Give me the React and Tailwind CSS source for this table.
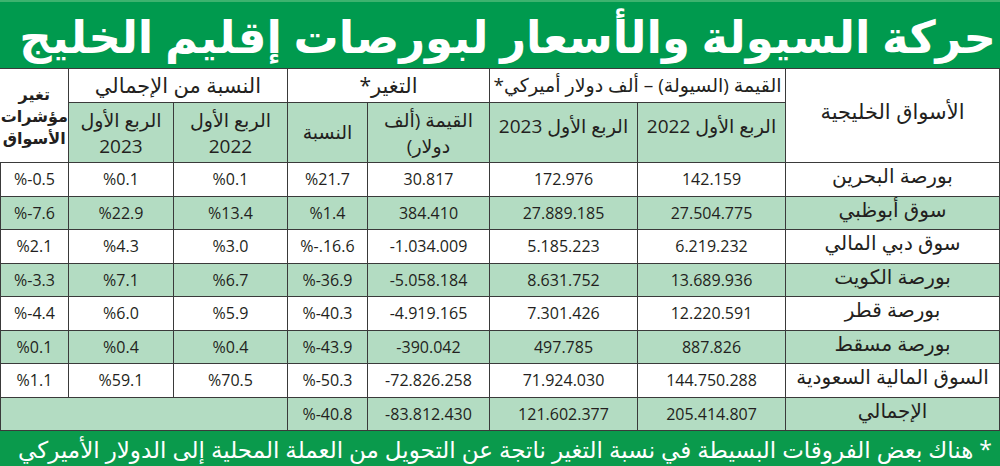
const rows = [
  { name: "بورصة البحرين", v22: "142.159", v23: "172.976", dv: "30.817", dp: "%21.7", s22: "%0.1", s23: "%0.1", idx: "%-0.5" },
  { name: "سوق أبوظبي", v22: "27.504.775", v23: "27.889.185", dv: "384.410", dp: "%1.4", s22: "%13.4", s23: "%22.9", idx: "%-7.6" },
  { name: "سوق دبي المالي", v22: "6.219.232", v23: "5.185.223", dv: "-1.034.009", dp: "%-.16.6", s22: "%3.0", s23: "%4.3", idx: "%2.1" },
  { name: "بورصة الكويت", v22: "13.689.936", v23: "8.631.752", dv: "-5.058.184", dp: "%-36.9", s22: "%6.7", s23: "%7.1", idx: "%-3.3" },
  { name: "بورصة قطر", v22: "12.220.591", v23: "7.301.426", dv: "-4.919.165", dp: "%-40.3", s22: "%5.9", s23: "%6.0", idx: "%-4.4" },
  { name: "بورصة مسقط", v22: "887.826", v23: "497.785", dv: "-390.042", dp: "%-43.9", s22: "%0.4", s23: "%0.4", idx: "%0.1" },
  { name: "السوق المالية السعودية", v22: "144.750.288", v23: "71.924.030", dv: "-72.826.258", dp: "%-50.3", s22: "%70.5", s23: "%59.1", idx: "%1.1" },
];

const cell = "border border-[#3a3a3a] text-center align-middle p-0";
const num = "text-[16px] text-[#231f20]";

function NumCell({ children }) {
  return (
    <td className={`${cell} ${num}`}>
      <span dir="ltr">{children}</span>
    </td>
  );
}

export default function App() {
  return (
    <div
      dir="rtl"
      className="w-[1000px] h-[466px] bg-white overflow-hidden text-[#231f20]"
      style={{ fontFamily: "'Open Sans', 'DejaVu Sans', sans-serif" }}
    >
      {/* Title */}
      <div className="h-[68px] bg-[#009a4e] border-t-2 border-[#3db36f] flex items-center px-1">
        <h1 className="text-white font-bold text-[45px] leading-none tracking-tight whitespace-nowrap">
          حركة السيولة والأسعار لبورصات إقليم الخليج
        </h1>
      </div>

      <table className="w-[999px] border-collapse table-fixed">
        <colgroup>
          <col className="w-[214px]" />
          <col className="w-[148px]" />
          <col className="w-[148px]" />
          <col className="w-[122px]" />
          <col className="w-[80px]" />
          <col className="w-[114px]" />
          <col className="w-[105px]" />
          <col className="w-[68px]" />
        </colgroup>
        <thead>
          <tr className="h-[34px]">
            <th rowSpan={2} className={`${cell} font-normal text-[21px] pb-2`}>
              الأسواق الخليجية
            </th>
            <th colSpan={2} className={`${cell} font-normal text-[19px] whitespace-nowrap`}>
              القيمة (السيولة) – ألف دولار أميركي*
            </th>
            <th colSpan={2} className={`${cell} font-normal text-[21px]`}>
              التغير*
            </th>
            <th colSpan={2} className={`${cell} font-normal text-[21px]`}>
              النسبة من الإجمالي
            </th>
            <th rowSpan={2} className={`${cell} font-bold text-[16px] leading-[22px] border-l-0`}>
              تغير
              <br />
              مؤشرات
              <br />
              الأسواق
            </th>
          </tr>
          <tr className="h-[60px] bg-[#b3dcc2]">
            <th className={`${cell} font-normal text-[19px] pb-3 whitespace-nowrap`}>الربع الأول 2022</th>
            <th className={`${cell} font-normal text-[19px] pb-3 whitespace-nowrap`}>الربع الأول 2023</th>
            <th className={`${cell} font-normal text-[19px] leading-[26px]`}>
              القيمة (ألف
              <br />
              دولار)
            </th>
            <th className={`${cell} font-normal text-[19px]`}>النسبة</th>
            <th className={`${cell} font-normal text-[19px] leading-[26px]`}>
              الربع الأول
              <br />
              2022
            </th>
            <th className={`${cell} font-normal text-[19px] leading-[26px]`}>
              الربع الأول
              <br />
              2023
            </th>
          </tr>
        </thead>
        <tbody>
          {rows.map((r, i) => (
            <tr key={r.name} className={`h-[33.5px] ${i % 2 === 1 ? "bg-[#b3dcc2]" : "bg-white"}`}>
              <td className={`${cell} text-[20px] leading-none whitespace-nowrap pb-[6px]`}>{r.name}</td>
              <NumCell>{r.v22}</NumCell>
              <NumCell>{r.v23}</NumCell>
              <NumCell>{r.dv}</NumCell>
              <NumCell>{r.dp}</NumCell>
              <NumCell>{r.s22}</NumCell>
              <NumCell>{r.s23}</NumCell>
              <NumCell>{r.idx}</NumCell>
            </tr>
          ))}
          <tr className="h-[33.5px] bg-[#b3dcc2]">
            <td className={`${cell} text-[20px] leading-none pb-[6px]`}>الإجمالي</td>
            <NumCell>205.414.807</NumCell>
            <NumCell>121.602.377</NumCell>
            <NumCell>-83.812.430</NumCell>
            <NumCell>%-40.8</NumCell>
            <td colSpan={3} className={cell}></td>
          </tr>
        </tbody>
      </table>

      {/* Footnote */}
      <div className="h-[36px] bg-[#0a9a4c] flex items-center px-2">
        <p className="text-white text-[23px] leading-none whitespace-nowrap">
          * هناك بعض الفروقات البسيطة في نسبة التغير ناتجة عن التحويل من العملة المحلية إلى الدولار الأميركي
        </p>
      </div>
    </div>
  );
}
